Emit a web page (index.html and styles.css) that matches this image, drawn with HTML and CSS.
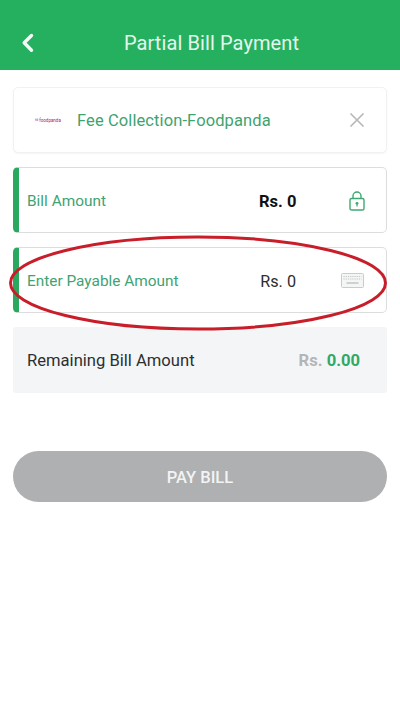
FILE: index.html
```html
<!DOCTYPE html>
<html lang="en">
<head>
<meta charset="utf-8">
<title>Partial Bill Payment</title>
<link rel="stylesheet" href="styles.css">
</head>
<body>
<div class="screen">
  <header class="topbar">
    <svg class="back" width="14" height="20" viewBox="0 0 14 20"><path d="M10.5 2.5 L3.2 9.8 L10.5 17.2" fill="none" stroke="#f4fbf6" stroke-width="3.4" stroke-linecap="round" stroke-linejoin="round"/></svg>
    <h1 class="title">Partial Bill Payment</h1>
  </header>
  <main class="content">
    <section class="card merchant">
      <span class="logo"><i class="logo-mark">fd</i><span>foodpanda</span></span>
      <span class="merchant-name">Fee Collection-Foodpanda</span>
      <svg class="close" width="16" height="16" viewBox="0 0 16 16"><path d="M1.5 1.5 L14.5 14.5 M14.5 1.5 L1.5 14.5" stroke="#b4b8b8" stroke-width="1.6" fill="none"/></svg>
    </section>
    <section class="card amount">
      <span class="amount-label">Bill Amount</span>
      <strong class="amount-value">Rs. 0</strong>
      <svg class="lock" width="16" height="20" viewBox="0 0 16 20"><rect x="1" y="7.5" width="14" height="11.5" rx="1.6" fill="none" stroke="#3fa873" stroke-width="1.4"/><path d="M4 7.5 V5 a4 4 0 0 1 8 0 V7.5" fill="none" stroke="#3fa873" stroke-width="1.4"/><circle cx="8" cy="12.3" r="1.4" fill="#3fa873"/><rect x="7.4" y="12.5" width="1.2" height="3" fill="#3fa873"/></svg>
    </section>
    <section class="card amount">
      <span class="amount-label">Enter Payable Amount</span>
      <span class="amount-value regular">Rs. 0</span>
      <svg class="keyboard" width="23" height="15" viewBox="0 0 23 15"><rect x="0.5" y="0.5" width="22" height="14" rx="1" fill="#f4f5f5" stroke="#c9cccc"/><path d="M2.5 3.5 H20.5 M2.5 6 H20.5" stroke="#c4c7c7" stroke-width="1.2" stroke-dasharray="1.2 1"/><path d="M5.5 10 H17.5" stroke="#b6b9b9" stroke-width="1.2"/></svg>
    </section>
    <section class="remaining">
      <span class="remaining-label">Remaining Bill Amount</span>
      <span class="remaining-value"><span class="currency">Rs.</span> <span class="sum">0.00</span></span>
    </section>
    <button class="pay" type="button">PAY BILL</button>
  </main>
  <svg class="annotation" width="400" height="110" viewBox="0 0 400 110"><ellipse cx="198" cy="49" rx="187.5" ry="46" fill="none" stroke="#c81e2a" stroke-width="3"/></svg>
</div>
</body>
</html>
```

FILE: styles.css
```css
* { box-sizing: border-box; }
html, body { margin: 0; padding: 0; background: #fff; }
body { font-family: Roboto, "Liberation Sans", sans-serif; }
.screen { position: relative; width: 400px; height: 722px; overflow: hidden; }

.topbar { height: 70px; background: #25b05f; display: flex; align-items: center; justify-content: center; position: relative; padding-top: 16px; }
.back { position: absolute; left: 21px; top: 33px; }
.title { margin: 0; font-size: 20px; font-weight: 400; color: #e6f6ec; letter-spacing: 0.1px; padding-left: 23px; }

.content { padding: 17px 13px 0; display: flex; flex-direction: column; }

.card { height: 66px; border-radius: 5px; background: #fff; display: flex; align-items: center; }
.merchant { border: 1px solid #f0f1f1; box-shadow: 0 1px 2px rgba(0,0,0,0.04); padding: 0 21px 0 21px; margin-bottom: 14px; }
.logo { width: 30px; display: flex; align-items: center; gap: 1px; font-size: 4.5px; color: #b0205c; white-space: nowrap; margin-right: 12px; }
.logo-mark { font-style: normal; font-size: 3.5px; }
.merchant-name { flex: 1; font-size: 16.5px; color: #3fa36f; letter-spacing: 0.1px; }

.amount { border: 1px solid #dcdedd; border-left: 6px solid #2aa85f; padding: 2px 21px 0 8px; margin-bottom: 14px; }
.amount-label { flex: 1; font-size: 15.4px; color: #3fa373; }
.amount-value { width: 37px; font-size: 16.5px; color: #111; margin-right: 53px; white-space: nowrap; text-align: right; }
.regular { color: #2d2d2d; font-size: 16.2px; }
.amount .keyboard { margin-right: 1px; margin-left: -8px; margin-top: -1px; }

.remaining { height: 66px; background: #f4f5f7; border-radius: 3px; display: flex; align-items: center; justify-content: space-between; padding: 0 27px 0 14px; }
.remaining-label { font-size: 16.6px; color: #2c2f31; }
.remaining-value { font-size: 16.6px; font-weight: 700; }
.currency { color: #b3b5b7; }
.sum { color: #32a866; }

.pay { margin-top: 58px; height: 51px; width: 100%; border: 0; border-radius: 26px; background: #aeb0b2; color: #f3f4f4; font: 500 16.5px Roboto, "Liberation Sans", sans-serif; padding-top: 2px; }

.annotation { position: absolute; left: 0; top: 234px; pointer-events: none; }
```
